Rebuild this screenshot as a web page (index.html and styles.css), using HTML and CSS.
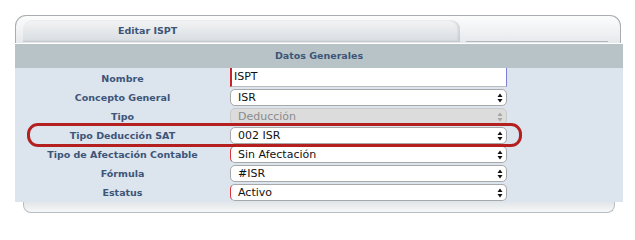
FILE: index.html
```html
<!DOCTYPE html>
<html lang="es">
<head>
<meta charset="utf-8">
<title>Editar ISPT</title>
<link rel="stylesheet" href="styles.css">
</head>
<body>
<div class="frame">
  <div class="tabs">
    <div class="tab">Editar ISPT</div>
    <div class="tab-rest"></div>
  </div>
  <div class="band">Datos Generales</div>
  <div class="content">
    <div class="label">Nombre</div>
    <div class="field"><div class="input">ISPT</div></div>

    <div class="label">Concepto General</div>
    <div class="field"><div class="select"><span>ISR</span><svg class="arrows" viewBox="0 0 6 10" width="6" height="10"><path d="M0.5 4 L3 0.5 L5.5 4 Z M0.5 6 L3 9.5 L5.5 6 Z"/></svg></div></div>

    <div class="label">Tipo</div>
    <div class="field"><div class="select disabled"><span>Deducción</span><svg class="arrows" viewBox="0 0 6 10" width="6" height="10"><path d="M0.5 4 L3 0.5 L5.5 4 Z M0.5 6 L3 9.5 L5.5 6 Z"/></svg></div></div>

    <div class="label">Tipo Deducción SAT</div>
    <div class="field"><div class="select"><span>002 ISR</span><svg class="arrows" viewBox="0 0 6 10" width="6" height="10"><path d="M0.5 4 L3 0.5 L5.5 4 Z M0.5 6 L3 9.5 L5.5 6 Z"/></svg></div></div>

    <div class="label">Tipo de Afectación Contable</div>
    <div class="field"><div class="select required"><span>Sin Afectación</span><svg class="arrows" viewBox="0 0 6 10" width="6" height="10"><path d="M0.5 4 L3 0.5 L5.5 4 Z M0.5 6 L3 9.5 L5.5 6 Z"/></svg></div></div>

    <div class="label">Fórmula</div>
    <div class="field"><div class="select"><span>#ISR</span><svg class="arrows" viewBox="0 0 6 10" width="6" height="10"><path d="M0.5 4 L3 0.5 L5.5 4 Z M0.5 6 L3 9.5 L5.5 6 Z"/></svg></div></div>

    <div class="label">Estatus</div>
    <div class="field"><div class="select required"><span>Activo</span><svg class="arrows" viewBox="0 0 6 10" width="6" height="10"><path d="M0.5 4 L3 0.5 L5.5 4 Z M0.5 6 L3 9.5 L5.5 6 Z"/></svg></div></div>
  </div>
  <div class="foot"></div>
  <div class="highlight"></div>
</div>
</body>
</html>
```
FILE: styles.css
```css
html, body {
  margin: 0;
  padding: 0;
  background: #ffffff;
}
body {
  font-family: "DejaVu Sans", Verdana, sans-serif;
}
.frame {
  position: relative;
  width: 608px;
  margin: 15px 0 0 15px;
}
.tabs {
  box-sizing: border-box;
  height: 28px;
  margin-right: 2px;
  border: 1px solid #a9adb1;
  border-bottom: none;
  border-radius: 11px 11px 0 0;
  background: linear-gradient(#fcfcfd, #e6e9ec);
  display: flex;
  align-items: flex-end;
  padding: 0 12px 1px 7px;
}
.tab {
  box-sizing: border-box;
  width: 437px;
  height: 22px;
  border-radius: 9px 9px 0 0;
  background: linear-gradient(#f3f4f5, #d9dee2);
  border-bottom: 1px solid #c3c9ce;
  box-shadow: inset -2px 0 2px rgba(160, 168, 175, 0.35);
  padding-left: 95px;
  font-size: 9.5px;
  font-weight: bold;
  line-height: 21px;
  color: #3d5578;
}
.tab-rest {
  flex: 1;
  margin-left: 6px;
  height: 0;
  border-bottom: 1px solid #b3b8bc;
}
.band {
  height: 24px;
  border-top: 1px solid #ffffff;
  background: #b7c3c6;
  text-align: center;
  font-size: 9.5px;
  font-weight: bold;
  line-height: 24px;
  color: #3d5578;
}
.content {
  height: 134px;
  background: #dce4ee;
  display: grid;
  grid-template-columns: 215px 277px;
  grid-auto-rows: 19px;
}
.label {
  padding-top: 2px;
  line-height: 17px;
  text-align: center;
  font-size: 9.5px;
  font-weight: bold;
  color: #3d5578;
  white-space: nowrap;
}
.field {
  font-size: 11px;
  color: #111;
}
.input {
  box-sizing: border-box;
  height: 19px;
  background: #ffffff;
  border-left: 2px solid #c8232c;
  border-right: 1px solid #7b80d6;
  border-bottom: 1px solid #bdbdbd;
  padding-left: 2px;
  line-height: 18px;
}
.select {
  box-sizing: border-box;
  height: 17px;
  margin-top: 2px;
  background: #ffffff;
  border: 1px solid #a8a8a8;
  border-radius: 5px;
  padding: 0 3px 0 7px;
  display: flex;
  align-items: center;
  justify-content: space-between;
  line-height: 15px;
}
.select .arrows {
  fill: #111;
  flex: none;
}
.select.required {
  border-left: 1px solid #d8323a;
}
.select.disabled {
  background: #dcdcdc;
  border-color: #cacaca;
  color: #8a8a8a;
}
.select.disabled .arrows {
  fill: #a5a5a5;
}
.foot {
  box-sizing: border-box;
  height: 11px;
  margin: 0 8px;
  border: 1px solid #b7bcc0;
  border-top: none;
  border-radius: 0 0 8px 8px;
  background: linear-gradient(#e2e6e9, #f6f7f8);
}
.highlight {
  position: absolute;
  left: 12px;
  top: 108px;
  width: 495px;
  height: 24px;
  box-sizing: border-box;
  border: 3px solid #b3201f;
  border-radius: 11px;
  pointer-events: none;
}
```
